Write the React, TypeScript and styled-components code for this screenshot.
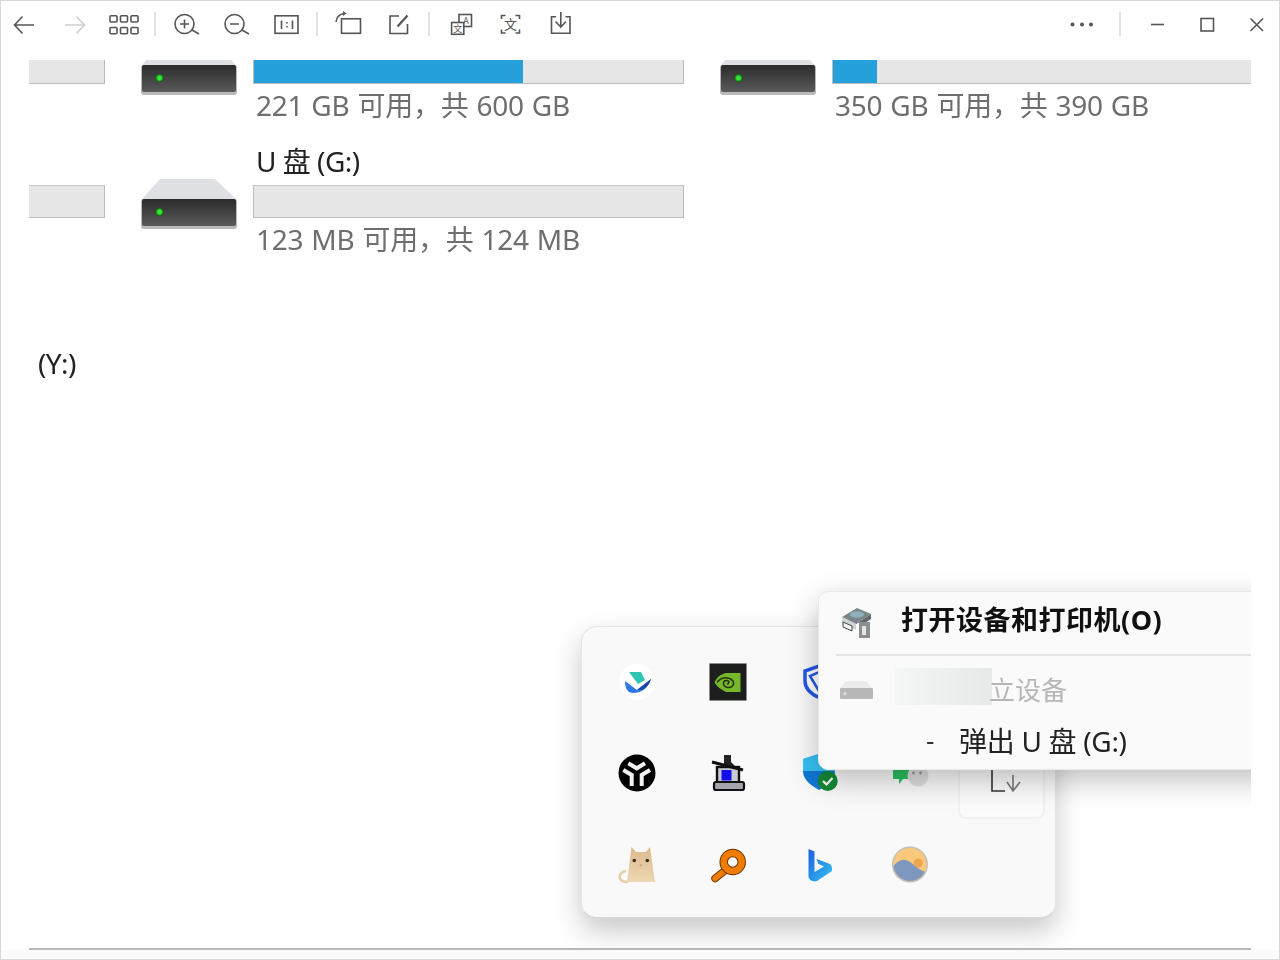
import React from 'react';
import styled, { createGlobalStyle } from 'styled-components';

const FONT = `"Noto Sans", "Noto Sans CJK SC", sans-serif`;
const INK = '#555';

const GlobalStyle = createGlobalStyle`
  html, body {
    margin: 0;
    padding: 0;
    background: #fff;
    font-family: ${FONT};
  }
`;

const Window = styled.div`
  box-sizing: border-box;
  width: 1280px;
  height: 960px;
  border: 1px solid #d8d8d8;
  background: #fff;
  overflow: hidden;
`;

const Toolbar = styled.div`
  box-sizing: border-box;
  display: flex;
  align-items: flex-start;
  height: 59px;
  padding: 9px 7px 0 8px;
`;

const ToolGroup = styled.div`
  display: flex;
  align-items: center;
  gap: 20px;
`;

const ToolDivider = styled.div<{ $left?: number; $right?: number }>`
  flex: none;
  width: 2px;
  height: 24px;
  margin: 2px ${(p) => p.$right ?? 15}px 0 ${(p) => p.$left ?? 15}px;
  background: #e2e2e2;
`;

const Spacer = styled.div`
  flex: 1;
`;

const ToolIcon = styled.svg<{ $muted?: boolean }>`
  display: block;
  width: 30px;
  height: 30px;
  fill: none;
  stroke: ${(p) => (p.$muted ? '#cfcfcf' : INK)};
  stroke-width: 1.6;
`;

const Viewer = styled.div`
  position: relative;
  width: 1222px;
  height: 890px;
  margin-left: 28px;
  border-bottom: 2px solid #b8b8b8;
  box-sizing: border-box;
  overflow: hidden;
  filter: blur(0.35px);
`;

const DriveGrid = styled.div`
  display: grid;
  grid-template-columns: repeat(3, 543px);
  column-gap: 36px;
  row-gap: 11px;
  margin: -55px 0 0 -467px;
`;

const Drive = styled.div`
  display: grid;
  grid-template-columns: 96px 1fr;
  column-gap: 16px;
`;

const DriveBody = styled.div`
  min-width: 0;
`;

const DriveIcon = styled.svg`
  display: block;
  width: 96px;
  height: 50px;
  margin-top: 40px;
`;

const DriveName = styled.div`
  height: 46px;
  line-height: 44px;
  padding-left: 3px;
  font-size: 28px;
  letter-spacing: -0.5px;
  color: #222;
  white-space: nowrap;
`;

const UsageBar = styled.div`
  box-sizing: border-box;
  height: 33px;
  background: #e6e6e6;
  border: 1px solid #bcbcbc;
  border-top-color: #c6c6c6;
`;

const UsageFill = styled.div`
  height: 100%;
  background: #26a0da;
`;

const DriveUsage = styled.div`
  height: 44px;
  line-height: 42px;
  padding-left: 3px;
  font-size: 28px;
  letter-spacing: -0.25px;
  word-spacing: 1px;
  color: #6e6e6e;
  white-space: nowrap;
`;

const StubBar = styled(UsageBar)`
  margin-top: 46px;
`;

const SectionLabel = styled.div`
  margin: 78px 0 0 9px;
  line-height: 46px;
  font-size: 28px;
  letter-spacing: -0.6px;
  color: #222;
`;

const TrayFlyout = styled.div`
  position: absolute;
  left: 552px;
  top: 566px;
  box-sizing: border-box;
  width: 475px;
  height: 293px;
  padding: 9px 0 0 9px;
  display: grid;
  grid-template-columns: repeat(5, 91px);
  grid-auto-rows: 91.5px;
  background: #f9f9f9;
  border: 1px solid #e6e6e6;
  border-bottom: 2px solid #d8d8d8;
  border-radius: 16px;
  box-shadow: 0 12px 28px rgba(0, 0, 0, 0.22);
`;

const TrayCell = styled.div<{ $raised?: boolean }>`
  display: flex;
  align-items: center;
  justify-content: center;
  ${(p) =>
    p.$raised &&
    `
    box-sizing: border-box;
    margin: 1px 1px 0 3px;
    border-radius: 8px;
    border: 2px solid #f1f1f1;
    background: #fbfbfb;
  `}
`;

const TrayIcon = styled.svg`
  display: block;
  flex: none;
  width: 38px;
  height: 38px;
`;

const ContextMenu = styled.div`
  position: absolute;
  left: 789px;
  top: 531px;
  box-sizing: border-box;
  width: 470px;
  height: 179px;
  background: #fafafa;
  border: 1px solid #e8e8e8;
  border-radius: 10px;
  box-shadow: 0 10px 30px rgba(0, 0, 0, 0.25);
`;

const MenuRow = styled.div<{ $height: number; $lift?: number }>`
  box-sizing: border-box;
  display: flex;
  align-items: center;
  height: ${(p) => p.$height}px;
  padding: 0 0 ${(p) => p.$lift ?? 0}px 20px;
  white-space: nowrap;
`;

const MenuIcon = styled.svg`
  display: block;
  flex: none;
  width: 34px;
  height: 34px;
`;

const MenuTitle = styled.span`
  margin: -7px 0 0 28px;
  font-size: 27px;
  font-weight: 700;
  letter-spacing: 0.5px;
  color: #111;
`;

const MenuSeparator = styled.div`
  height: 2px;
  margin-left: 17px;
  background: #e4e4e4;
`;

const BlurredName = styled.div`
  flex: none;
  width: 97px;
  height: 37px;
  margin: -9px 0 0 22px;
  background: linear-gradient(90deg, #f5f6f6, #e6e9e8);
`;

const MenuDisabled = styled.span`
  margin: -3px 0 0 -3px;
  font-size: 26px;
  color: #b6b6b6;
`;

const MenuDash = styled.span`
  margin-left: 87px;
  width: 33px;
  font-size: 26px;
  color: #333;
`;

const MenuAction = styled.span`
  font-size: 28px;
  letter-spacing: -0.3px;
  color: #222;
`;

const WindowBottom = styled.div`
  height: 8px;
  background: #fbfbfb;
`;

const Glyph = styled.text<{ $size: number }>`
  font-family: "Noto Sans CJK SC", sans-serif;
  font-size: ${(p) => p.$size}px;
  fill: ${INK};
  stroke: none;
  text-anchor: middle;
`;

const DriveArt = ({ id }: { id: string }) => (
  <DriveIcon viewBox="0 0 96 50">
    <defs>
      <linearGradient id={`${id}-body`} x1="0" y1="0" x2="0" y2="1">
        <stop offset="0" stopColor="#2b2b2b" />
        <stop offset="1" stopColor="#5a5a5a" />
      </linearGradient>
      <radialGradient id={`${id}-led`}>
        <stop offset="0.45" stopColor="#35e535" />
        <stop offset="1" stopColor="#0c5f0c" />
      </radialGradient>
    </defs>
    <path d="M19 0H74L96 21H0Z" fill="#dfe0e3" />
    <rect x="0" y="20" width="96" height="30" rx="3" fill="#b9b9b9" />
    <rect x="1" y="20" width="94" height="27" rx="2" fill={`url(#${id}-body)`} />
    <circle cx="18.5" cy="33" r="4" fill={`url(#${id}-led)`} />
  </DriveIcon>
);

const DriveCard = ({
  id,
  name,
  usage,
  percent,
}: {
  id: string;
  name?: string;
  usage?: string;
  percent: number;
}) => (
  <Drive>
    <DriveArt id={id} />
    <DriveBody>
      <DriveName>{name}</DriveName>
      <UsageBar>
        <UsageFill style={{ width: `${percent}%` }} />
      </UsageBar>
      <DriveUsage>{usage}</DriveUsage>
    </DriveBody>
  </Drive>
);

const LarkIcon = () => (
  <TrayIcon viewBox="0 0 38 38">
    <circle cx="19" cy="19" r="18" fill="#fff" />
    <path d="M11 9H23L27 17L20 21Z" fill="#2fc6b4" />
    <path d="M7 18L19 27L33 16C31 24 24 30 15 30C10 30 7 26 7 18Z" fill="#2f78e8" />
    <path d="M19 27L33 16C31 22 28 25 24 27Z" fill="#1a4aa8" />
  </TrayIcon>
);

const NvidiaIcon = () => (
  <TrayIcon viewBox="0 0 38 38">
    <rect x="0.5" y="0.5" width="37" height="37" fill="#1c1f1c" />
    <path d="M17 10H31.5V29H17C13 27 8 24 5.5 19.5C8 14 12 11 17 10Z" fill="#76b82a" />
    <path
      d="M8 19.5C12 14 20 13 24 18C26 22 22 26 17 24C13 22 14 17 18 17.5C21 18 20 21 18 21"
      fill="none"
      stroke="#24330f"
      strokeWidth="1.5"
    />
  </TrayIcon>
);

const ShieldOutlineIcon = () => (
  <TrayIcon viewBox="0 0 38 38">
    <path
      d="M19 3L33 8V18C33 26 27 31 19 34.5C11 31 5 26 5 18V8Z"
      fill="#fff"
      stroke="#2457e8"
      strokeWidth="3.5"
    />
    <path d="M19 9L28 13L19 28L10 13Z" fill="none" stroke="#2457e8" strokeWidth="2.5" />
  </TrayIcon>
);

const YIcon = () => (
  <TrayIcon viewBox="0 0 38 38">
    <circle cx="19" cy="19" r="18.5" fill="#000" />
    <g fill="none" stroke="#f2f2f2" strokeWidth="4">
      <path d="M10.3 9.3L18.7 14.3L27 9.3" />
      <path d="M5.3 16L13.7 21V32" />
      <path d="M32 16L23.7 21V32" />
    </g>
  </TrayIcon>
);

const PixelPrinterIcon = () => (
  <TrayIcon viewBox="0 0 38 38">
    <rect x="8" y="13" width="22" height="17" fill="#c9c9d2" stroke="#111" strokeWidth="2.4" />
    <rect x="12.5" y="16" width="10" height="10.5" fill="#1010ee" />
    <rect x="5" y="28" width="30" height="8" rx="2" fill="#a4a4ac" stroke="#111" strokeWidth="2.2" />
    <path d="M15 1H22V8L26 12H15Z" fill="#222" />
    <path d="M3 8L34 16" stroke="#111" strokeWidth="3" />
  </TrayIcon>
);

const DefenderIcon = () => (
  <TrayIcon viewBox="0 0 38 38">
    <path d="M19 0L3 5V17C3 25 10 31 19 36C28 31 35 25 35 17V5Z" fill="#0f78d4" />
    <path d="M19 0L3 5V17H35V5Z" fill="#35c1f1" />
    <circle cx="27.7" cy="27" r="10" fill="#128a36" />
    <path d="M23 27L26.5 30.5L32.5 24" fill="none" stroke="#fff" strokeWidth="2.2" />
  </TrayIcon>
);

const WeChatIcon = () => (
  <TrayIcon viewBox="0 0 38 38">
    <path d="M2 15H18V25H12L8 30V25H2Z" fill="#2bc05d" />
    <circle cx="27" cy="22" r="10.5" fill="#dedede" />
    <circle cx="22.5" cy="19" r="1.4" fill="#999" />
    <circle cx="29.5" cy="19" r="1.4" fill="#999" />
  </TrayIcon>
);

const TrayDownIcon = () => (
  <TrayIcon viewBox="0 0 38 38" fill="none" stroke="#333" strokeWidth="1.6">
    <path d="M9 14V36H22" />
    <path d="M30 20V36M24 27L30 36L37 27" stroke="#777" />
  </TrayIcon>
);

const CatIcon = () => (
  <TrayIcon viewBox="0 0 38 38">
    <defs>
      <linearGradient id="cat-fur" x1="0" y1="0" x2="0" y2="1">
        <stop offset="0" stopColor="#dcb98c" />
        <stop offset="1" stopColor="#eed7b4" />
      </linearGradient>
    </defs>
    <path d="M13.5 1L18 6H28L32 1L37 36H9Z" fill="url(#cat-fur)" />
    <path d="M8 25C2 26 0 31 3 34C5 36 8 36 10 36" fill="none" stroke="#e6cfa9" strokeWidth="2.5" />
    <circle cx="16.3" cy="14.5" r="1.8" fill="#3c3026" />
    <circle cx="29.3" cy="14.5" r="1.8" fill="#3c3026" />
    <path d="M21.3 18.5H24.3L22.8 20.5Z" fill="#c09a74" />
  </TrayIcon>
);

const OrangeKeyIcon = () => (
  <TrayIcon viewBox="0 0 38 38">
    <path d="M16 24.5L6 32.5" stroke="#6a3400" strokeWidth="7.5" strokeLinecap="round" />
    <path d="M16 24.5L6 32.5" stroke="#f07c00" strokeWidth="5.5" strokeLinecap="round" />
    <circle cx="23.7" cy="16" r="9" fill="#fff" stroke="#6a3400" strokeWidth="8.5" />
    <circle cx="23.7" cy="16" r="9" fill="none" stroke="#f07c00" strokeWidth="6.5" />
  </TrayIcon>
);

const BingIcon = () => (
  <TrayIcon viewBox="0 0 38 38">
    <defs>
      <linearGradient id="bing-fill" x1="0" y1="0" x2="1" y2="1">
        <stop offset="0" stopColor="#1b5fe0" />
        <stop offset="1" stopColor="#36c5f0" />
      </linearGradient>
    </defs>
    <path
      d="M8.5 3L14.5 5.5V26L24 20.5L18.5 18L16.5 13L30 18C31.5 19 32 21 32 23V25L17 35C14 36 11 35 9.5 33C8.7 32 8.5 31 8.5 30Z"
      fill="url(#bing-fill)"
    />
  </TrayIcon>
);

const SunsetIcon = () => (
  <TrayIcon viewBox="0 0 38 38">
    <defs>
      <clipPath id="sunset-clip">
        <circle cx="19" cy="18.5" r="16.5" />
      </clipPath>
    </defs>
    <circle cx="19" cy="18.5" r="18" fill="#c4c0b8" />
    <g clipPath="url(#sunset-clip)">
      <rect width="38" height="38" fill="#f8c97a" />
      <circle cx="27.3" cy="17" r="4.5" fill="#f0a550" />
      <path d="M0 23C5 16 10 13 14 14C20 15 24 21 30 24C33 25.5 36 27 38 28V38H0Z" fill="#7e97be" />
    </g>
  </TrayIcon>
);

const DevicesIcon = () => (
  <MenuIcon viewBox="0 0 34 34">
    <path d="M3 12L18 3L32 9L17 19Z" fill="#7c8689" />
    <ellipse cx="18" cy="9.5" rx="7" ry="3.2" fill="#8fb0bb" />
    <path d="M3 12L17 19V25L3 18Z" fill="#cfd2d2" />
    <path d="M17 19L32 9V14L26 18H17Z" fill="#5f676a" />
    <path d="M4 17L13 21V26L4 22Z" fill="#f4f4f4" stroke="#444" />
    <rect x="20" y="17" width="11" height="16" fill="#8a9091" />
    <rect x="23" y="21" width="4" height="9" fill="#e5e5e5" />
  </MenuIcon>
);

const DimDriveIcon = () => (
  <MenuIcon viewBox="0 0 34 34">
    <path d="M7 7H27L33 14H1Z" fill="#ececec" />
    <rect x="1" y="14" width="33" height="11" rx="1" fill="#b7b7b7" />
    <circle cx="6" cy="19.5" r="1.5" fill="#e4e4e4" />
  </MenuIcon>
);

export default function App() {
  return (
    <>
      <GlobalStyle />
      <Window>
        <Toolbar>
          <ToolGroup>
            <ToolIcon viewBox="0 0 30 30">
              <path d="M25 15H6M13.5 6.5L5.5 15L13.5 23.5" />
            </ToolIcon>
            <ToolIcon viewBox="0 0 30 30" $muted>
              <path d="M6 15H25M17.5 6.5L25.5 15L17.5 23.5" />
            </ToolIcon>
            <ToolIcon viewBox="0 0 30 30">
              <rect x="1" y="5.8" width="7" height="6.2" rx="1" />
              <rect x="11.5" y="5.8" width="7" height="6.2" rx="1" />
              <rect x="22" y="5.8" width="7" height="6.2" rx="1" />
              <rect x="1" y="17.5" width="7" height="6.2" rx="1" />
              <rect x="11.5" y="17.5" width="7" height="6.2" rx="1" />
              <rect x="22" y="17.5" width="7" height="6.2" rx="1" />
            </ToolIcon>
          </ToolGroup>
          <ToolDivider />
          <ToolGroup>
            <ToolIcon viewBox="0 0 30 30">
              <circle cx="13.5" cy="14" r="9.5" />
              <path d="M21 20L28 24M9 14H18M13.5 9.5V18.5" />
            </ToolIcon>
            <ToolIcon viewBox="0 0 30 30">
              <circle cx="13.5" cy="14" r="9.5" />
              <path d="M21 20L28 24M9 14H18" />
            </ToolIcon>
            <ToolIcon viewBox="0 0 30 30">
              <rect x="4" y="5.8" width="23" height="17.5" />
              <path d="M10.5 10.5V19M21.5 10.5V19M16 12V13.5M16 16V17.5" />
            </ToolIcon>
          </ToolGroup>
          <ToolDivider />
          <ToolGroup>
            <ToolIcon viewBox="0 0 30 30">
              <rect x="8.5" y="8.8" width="19" height="14.5" />
              <path d="M3 12C3.5 7.5 6.5 4.5 10.5 3.8" />
              <path d="M10 1L13.5 3.5L10 6Z" fill={INK} stroke="none" />
            </ToolIcon>
            <ToolIcon viewBox="0 0 30 30">
              <path d="M16 6H7V23.5H24.5V14" />
              <path d="M24.5 5.5L14.5 16.5" strokeWidth="2.2" />
            </ToolIcon>
          </ToolGroup>
          <ToolDivider $right={16} />
          <ToolGroup>
            <ToolIcon viewBox="0 0 30 30" strokeWidth="1.4">
              <rect x="13" y="4.5" width="12.5" height="12" />
              <rect x="5.6" y="12.5" width="12.2" height="11.8" fill="#fff" />
              <Glyph $size={9} x="20" y="13.5">A</Glyph>
              <Glyph $size={9} x="11.7" y="21.5">文</Glyph>
            </ToolIcon>
            <ToolIcon viewBox="0 0 30 30">
              <path d="M5.5 9V5.5H9.5M19.5 5.5H23.5V9M5.5 19.5V23H9.5M19.5 23H23.5V19.5" />
              <Glyph $size={13} x="14.5" y="19">文</Glyph>
            </ToolIcon>
            <ToolIcon viewBox="0 0 30 30">
              <path d="M10 6.7H5.5V23.3H24V6.7H19.5" />
              <path d="M14.8 2V17M9.5 11.5L14.8 17L20 11.5" />
            </ToolIcon>
          </ToolGroup>
          <Spacer />
          <ToolGroup>
            <ToolIcon viewBox="0 0 30 30">
              <circle cx="5.5" cy="14.5" r="2" fill={INK} stroke="none" />
              <circle cx="15" cy="14.5" r="2" fill={INK} stroke="none" />
              <circle cx="24" cy="14.5" r="2" fill={INK} stroke="none" />
            </ToolIcon>
          </ToolGroup>
          <ToolDivider $left={22} $right={21} />
          <ToolGroup>
            <ToolIcon viewBox="0 0 30 30">
              <path d="M9 14.5H22" />
            </ToolIcon>
            <ToolIcon viewBox="0 0 30 30">
              <rect x="9" y="8.5" width="12.5" height="12.5" />
            </ToolIcon>
            <ToolIcon viewBox="0 0 30 30">
              <path d="M8.5 8.5L21 21M21 8.5L8.5 21" />
            </ToolIcon>
          </ToolGroup>
        </Toolbar>
        <Viewer>
          <DriveGrid>
            <div>
              <StubBar />
            </div>
            <DriveCard id="c" usage="221 GB 可用，共 600 GB" percent={62.6} />
            <DriveCard id="d" usage="350 GB 可用，共 390 GB" percent={10.2} />
            <div>
              <StubBar />
            </div>
            <DriveCard id="g" name="U 盘 (G:)" usage="123 MB 可用，共 124 MB" percent={0} />
          </DriveGrid>
          <SectionLabel>(Y:)</SectionLabel>
          <TrayFlyout>
            <TrayCell><LarkIcon /></TrayCell>
            <TrayCell><NvidiaIcon /></TrayCell>
            <TrayCell><ShieldOutlineIcon /></TrayCell>
            <TrayCell />
            <TrayCell />
            <TrayCell><YIcon /></TrayCell>
            <TrayCell><PixelPrinterIcon /></TrayCell>
            <TrayCell><DefenderIcon /></TrayCell>
            <TrayCell><WeChatIcon /></TrayCell>
            <TrayCell $raised><TrayDownIcon /></TrayCell>
            <TrayCell><CatIcon /></TrayCell>
            <TrayCell><OrangeKeyIcon /></TrayCell>
            <TrayCell><BingIcon /></TrayCell>
            <TrayCell><SunsetIcon /></TrayCell>
          </TrayFlyout>
          <ContextMenu>
            <MenuRow $height={62} $lift={3}>
              <DevicesIcon />
              <MenuTitle>打开设备和打印机(O)</MenuTitle>
            </MenuRow>
            <MenuSeparator />
            <MenuRow $height={69}>
              <DimDriveIcon />
              <BlurredName />
              <MenuDisabled>立设备</MenuDisabled>
            </MenuRow>
            <MenuRow $height={32} $lift={3}>
              <MenuDash>-</MenuDash>
              <MenuAction>弹出 U 盘 (G:)</MenuAction>
            </MenuRow>
          </ContextMenu>
        </Viewer>
        <WindowBottom />
      </Window>
    </>
  );
}
